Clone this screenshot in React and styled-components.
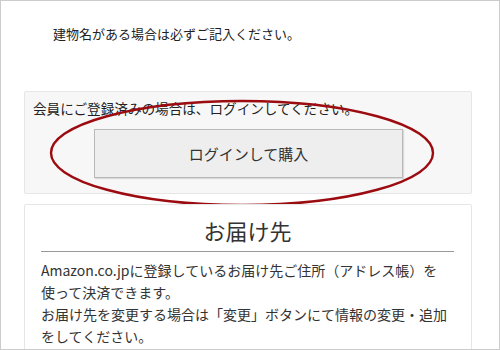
import React from 'react'
import styled, { createGlobalStyle } from 'styled-components'

const GlobalStyle = createGlobalStyle`
  html, body {
    margin: 0;
    padding: 0;
    background: #ffffff;
  }
  body {
    font-family: "Noto Sans CJK JP", "Noto Sans", sans-serif;
    color: #333333;
  }
`

const Frame = styled.div`
  box-sizing: border-box;
  width: 500px;
  height: 350px;
  border: 1px solid #cccccc;
  overflow: hidden;
  background: #ffffff;
  padding: 0 27px 0 23px;
`

const Note = styled.p`
  margin: 0;
  padding: 23px 0 0 29px;
  font-size: 13px;
  line-height: 20px;
  color: #222222;
`

const Panel = styled.div`
  position: relative;
  box-sizing: border-box;
  border: 1px solid #e6e6e6;
  border-radius: 2px;
  background: ${(p) => (p.$tinted ? '#f7f7f7' : '#ffffff')};
  margin-top: ${(p) => p.$top}px;
`

const LoginPanel = styled(Panel)`
  height: 103px;
  padding: 5px 0 0 8px;
`

const LoginText = styled.p`
  margin: 0;
  font-size: 13.6px;
  line-height: 22px;
  color: #222222;
`

const LoginButton = styled.button`
  display: block;
  box-sizing: border-box;
  width: 309px;
  height: 49px;
  margin: 10px 0 0 61px;
  border: 1px solid #b9b9b9;
  background: #eeeeee;
  box-shadow: 1px 1px 1px rgba(0, 0, 0, 0.12);
  font-family: "Noto Sans CJK JP", sans-serif;
  font-size: 15px;
  color: #333333;
  cursor: pointer;
`

const Circle = styled.svg`
  position: absolute;
  left: 24px;
  top: 6px;
  pointer-events: none;
  overflow: visible;
`

const AddressPanel = styled(Panel)`
  height: 200px;
  padding: 10px 17px 0 16px;
`

const Title = styled.h2`
  margin: 0;
  padding-bottom: 6px;
  border-bottom: 1px solid #999999;
  text-align: center;
  font-weight: normal;
  font-size: 22px;
  line-height: 30px;
  color: #333333;
`

const Body = styled.p`
  margin: 0;
  padding-top: 7px;
  font-size: 14px;
  line-height: 22px;
  color: #333333;
`

const App = () => {
  return (
    <Frame>
      <GlobalStyle />
      <Note>建物名がある場合は必ずご記入ください。</Note>
      <LoginPanel $tinted $top={47}>
        <LoginText>会員にご登録済みの場合は、ログインしてください。</LoginText>
        <LoginButton>ログインして購入</LoginButton>
        <Circle width="386" height="106" viewBox="0 0 386 106">
          <ellipse cx="193" cy="55" rx="191" ry="52" fill="none" stroke="#9c0b10" strokeWidth="2.4" />
        </Circle>
      </LoginPanel>
      <AddressPanel $top={10}>
        <Title>お届け先</Title>
        <Body>
          Amazon.co.jpに登録しているお届け先ご住所（アドレス帳）を
          <br />
          使って決済できます。
          <br />
          お届け先を変更する場合は「変更」ボタンにて情報の変更・追加
          <br />
          をしてください。
        </Body>
      </AddressPanel>
    </Frame>
  )
}

export default App
